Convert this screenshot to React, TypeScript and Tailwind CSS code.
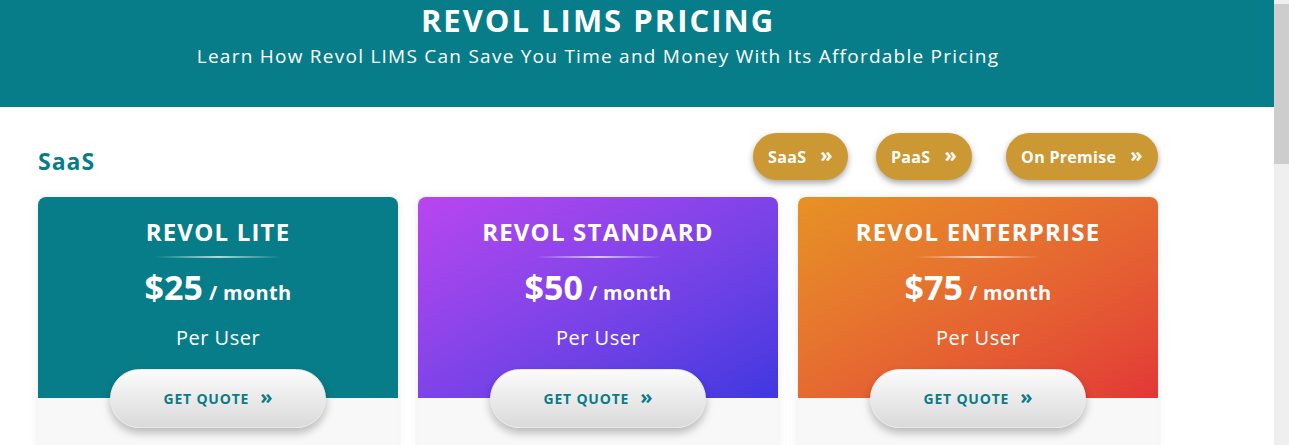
import React from "react";

interface Plan {
  name: string;
  price: string;
  bg: string;
}

const plans: Plan[] = [
  { name: "REVOL LITE", price: "$25", bg: "bg-[#077d89]" },
  {
    name: "REVOL STANDARD",
    price: "$50",
    bg: "bg-gradient-to-br from-[#b945f0] to-[#3f37df]",
  },
  {
    name: "REVOL ENTERPRISE",
    price: "$75",
    bg: "bg-gradient-to-br from-[#e69224] to-[#e23636]",
  },
];

const Chevrons: React.FC<{ className?: string }> = ({ className }) => (
  <span className={`font-bold leading-none ${className ?? ""}`}>»</span>
);

const PlanCard: React.FC<{ plan: Plan }> = ({ plan }) => (
  <div className="flex flex-col rounded-t-[8px] shadow-[0_0_10px_rgba(0,0,0,0.08)]">
    {/* Coloured head */}
    <div className={`flex flex-col items-center rounded-t-[8px] pt-[21px] text-white ${plan.bg}`}>
      <h2 className="text-[24px] font-bold leading-[28px] tracking-[1.2px]">{plan.name}</h2>
      <div className="mt-[10px] h-[2px] w-[126px] bg-gradient-to-r from-transparent via-white/70 to-transparent" />
      <p className="mt-[12px] flex items-baseline font-bold leading-none">
        <span className="text-[34px]">{plan.price}</span>
        <span className="ml-[6px] text-[20px] tracking-[0.3px]">/ month</span>
      </p>
      <p className="mt-[22px] text-[20px] leading-[24px] tracking-[0.5px]">Per User</p>
      <button className="relative z-10 mt-[19px] -mb-[30px] flex h-[59px] w-[216px] items-center justify-center gap-[11px] rounded-full border border-[#e8e8e8] bg-gradient-to-b from-[#fbfbfb] to-[#dadada] shadow-[0_5px_8px_rgba(0,0,0,0.25)]">
        <span className="text-[14px] font-bold tracking-[0.8px] text-[#0b7b86]">GET QUOTE</span>
        <Chevrons className="text-[20px] text-[#0b7b86] -mt-[3px]" />
      </button>
    </div>
    {/* Light foot */}
    <div className="h-[80px] bg-[#f8f8f8]" />
  </div>
);

export default function App() {
  const tabs = [
    { label: "SaaS", cls: "w-[95px]" },
    { label: "PaaS", cls: "ml-[28px] w-[96px]" },
    { label: "On Premise", cls: "ml-[34px] w-[152px]" },
  ];

  return (
    <div className="flex h-[445px] w-[1289px] overflow-hidden bg-white font-['Open_Sans',sans-serif]">
      <div className="min-w-0 flex-1">
        {/* Banner */}
        <header className="h-[107px] bg-[#077d89]">
          <div className="ml-[38px] w-[1120px] text-center text-white">
            <h1 className="text-[31px] font-bold leading-[40px] tracking-[2px]">REVOL LIMS PRICING</h1>
            <p className="mt-[3px] text-[19px] font-normal leading-[26px] tracking-[1.25px]">
              Learn How Revol LIMS Can Save You Time and Money With Its Affordable Pricing
            </p>
          </div>
        </header>

        <div className="ml-[38px] w-[1120px]">
          {/* Section row */}
          <div className="mt-[26px] flex items-start justify-between">
            <h3 className="mt-[14px] text-[23px] font-bold leading-[28px] tracking-[1px] text-[#077d89]">SaaS</h3>
            <div className="flex">
              {tabs.map((t) => (
                <button
                  key={t.label}
                  className={`flex h-[47px] items-center justify-center gap-[14px] rounded-full bg-[#cc9833] text-[16px] font-bold tracking-[0.3px] text-white shadow-[0_3px_6px_rgba(0,0,0,0.35)] ${t.cls}`}
                >
                  <span>{t.label}</span>
                  <Chevrons className="text-[20px] -mt-[3px]" />
                </button>
              ))}
            </div>
          </div>

          {/* Plans */}
          <div className="mt-[17px] grid grid-cols-3 gap-[20px]">
            {plans.map((p) => (
              <PlanCard key={p.name} plan={p} />
            ))}
          </div>
        </div>
      </div>

      {/* Scrollbar */}
      <div className="w-[15px] shrink-0 bg-[#efefef] pt-[4px]">
        <div className="h-[160px] bg-[#cdcdcd]" />
      </div>
    </div>
  );
}
